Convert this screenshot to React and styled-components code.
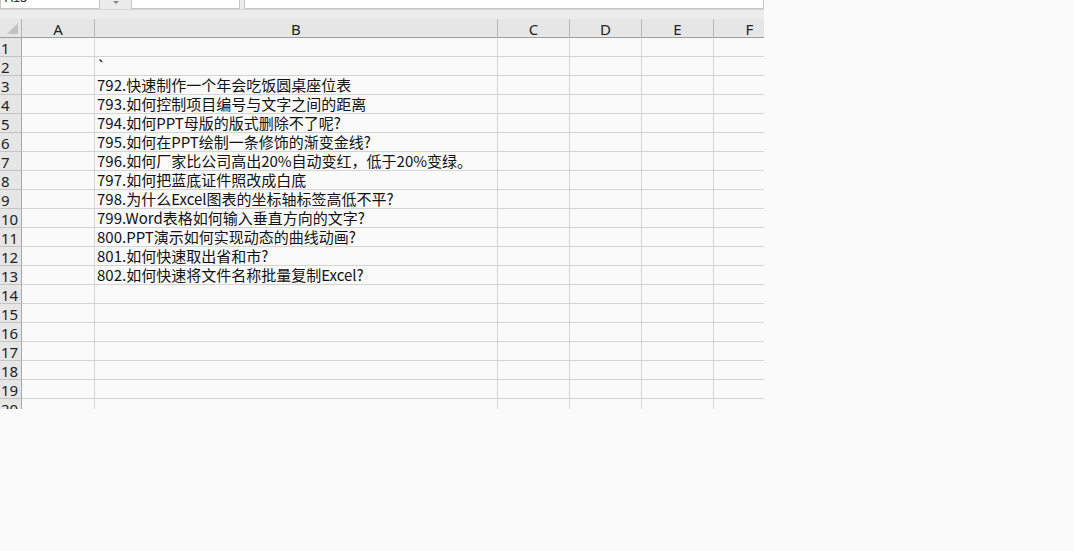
import React from 'react'
import styled, { createGlobalStyle } from 'styled-components'

const Global = createGlobalStyle`
  html, body { margin: 0; padding: 0; background: #fafafa; }
  body { font-family: "Noto Sans CJK SC", "Noto Sans", sans-serif; }
`

const Page = styled.div`
  width: 1074px;
  height: 551px;
  background: #fafafa;
  overflow: hidden;
`

const Sheet = styled.div`
  width: 764px;
  height: 409px;
  overflow: hidden;
  display: flex;
  flex-direction: column;
  background: #ececec;
  & > * { flex-shrink: 0; }
`

const FormulaBar = styled.div`
  height: 9px;
  display: flex;
  align-items: stretch;
  border-bottom: 1px solid #d6d6d6;
  background: #ececec;
`

const Box = styled.div`
  width: ${p => p.$w}px;
  margin-left: ${p => p.$ml || 0}px;
  background: #fff;
  border: 1px solid #c6c6c6;
  border-top: none;
  box-sizing: border-box;
  overflow: hidden;
  font-size: 13px;
  color: #333;
  line-height: 13px;
  padding-left: 4px;
  ${p => p.$grow && 'flex: 1;'}
`

const Clip = styled.span`
  display: block;
  margin-top: -10px;
`

const Arrow = styled.div`
  width: 31px;
  display: flex;
  justify-content: center;
  align-items: flex-start;
  &::before {
    content: '';
    margin-top: 1px;
    border-left: 3px solid transparent;
    border-right: 3px solid transparent;
    border-top: 3px solid #888;
  }
`

const Gap = styled.div`
  height: 9px;
  background: #ececec;
`

const Grid = styled.div`
  display: grid;
  grid-template-columns: 22px 73px 403px 72px 72px 72px 72px;
  grid-auto-rows: 19px;
  width: 786px;
  background: #fafafa;
`

const Corner = styled.div`
  position: relative;
  background: #e6e6e6;
  border-right: 1px solid #b4b4b4;
  border-bottom: 1px solid #9e9e9e;
  box-sizing: border-box;
  &::after {
    content: '';
    position: absolute;
    right: 3px;
    bottom: 3px;
    border-left: 11px solid transparent;
    border-bottom: 11px solid #c2c2c2;
  }
`

const ColHead = styled.div`
  background: #e6e6e6;
  border-right: 1px solid #b8b8b8;
  border-bottom: 1px solid #9e9e9e;
  box-sizing: border-box;
  display: flex;
  align-items: center;
  justify-content: center;
  font-family: "Noto Sans", "Liberation Sans", sans-serif;
  font-size: 15px;
  color: #222;
  line-height: 1;
  padding-top: 2px;
`

const RowHead = styled.div`
  background: #e6e6e6;
  border-right: 1px solid #a8a8a8;
  border-bottom: 1px solid #c4c4c4;
  box-sizing: border-box;
  font-family: "Noto Sans", "Liberation Sans", sans-serif;
  font-size: 15px;
  color: #222;
  line-height: 18px;
  padding-left: 1px;
  padding-top: 1px;
`

const Cell = styled.div`
  border-right: 1px solid #d4d4d4;
  border-bottom: 1px solid #d4d4d4;
  box-sizing: border-box;
  font-size: 15px;
  line-height: 18px;
  color: #111;
  padding-left: 2px;
  white-space: nowrap;
  overflow: visible;
  position: relative;
  z-index: ${p => (p.$over ? 1 : 0)};
`

const cols = ['A', 'B', 'C', 'D', 'E', 'F']

const items = [
  '',
  '`',
  '792.快速制作一个年会吃饭圆桌座位表',
  '793.如何控制项目编号与文字之间的距离',
  '794.如何PPT母版的版式删除不了呢?',
  '795.如何在PPT绘制一条修饰的渐变金线?',
  '796.如何厂家比公司高出20%自动变红，低于20%变绿。',
  '797.如何把蓝底证件照改成白底',
  '798.为什么Excel图表的坐标轴标签高低不平?',
  '799.Word表格如何输入垂直方向的文字?',
  '800.PPT演示如何实现动态的曲线动画?',
  '801.如何快速取出省和市?',
  '802.如何快速将文件名称批量复制Excel?',
]

const rows = Array.from({ length: 20 }, (_, i) => i + 1)

export default function App() {
  return (
    <Page>
      <Global />
      <Sheet>
        <FormulaBar>
          <Box $w={100}><Clip>A13</Clip></Box>
          <Arrow />
          <Box $w={109} />
          <Box $ml={4} $grow />
        </FormulaBar>
        <Gap />
        <Grid>
          <Corner />
          {cols.map(c => <ColHead key={c}>{c}</ColHead>)}
          {rows.map(r => (
            <React.Fragment key={r}>
              <RowHead>{r}</RowHead>
              <Cell />
              <Cell $over>{items[r - 1] || ''}</Cell>
              <Cell />
              <Cell />
              <Cell />
              <Cell />
            </React.Fragment>
          ))}
        </Grid>
      </Sheet>
    </Page>
  )
}
